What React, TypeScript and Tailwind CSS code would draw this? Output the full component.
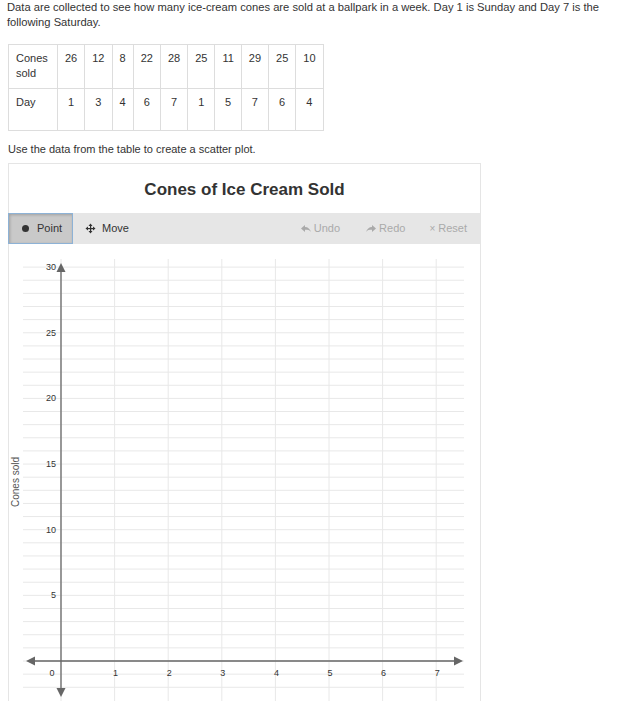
import React from "react";

const cones = [26, 12, 8, 22, 28, 25, 11, 29, 25, 10];
const days = [1, 3, 4, 6, 7, 1, 5, 7, 6, 4];

const X0 = 61;
const Y0 = 660;
const XU = 53.6;
const YU = 13.13;

function Plot() {
  const hLines = [];
  for (let k = -2; k <= 30; k++) hLines.push(Y0 - k * YU);
  const vLines = [];
  for (let k = 0; k <= 7; k++) vLines.push(X0 + k * XU);

  return (
    <svg width="471" height="460" className="block">
      <g transform="translate(-9,-243)">
        {hLines.map((y, i) => (
          <line key={"h" + i} x1={23} x2={464} y1={y} y2={y} stroke="#e8e8e8" strokeWidth={1} />
        ))}
        {vLines.map((x, i) => (
          <line key={"v" + i} x1={x} x2={x} y1={258} y2={704} stroke="#e8e8e8" strokeWidth={1} />
        ))}
        {/* axes */}
        <line x1={30} x2={458} y1={Y0} y2={Y0} stroke="#666" strokeWidth={1.3} />
        <line x1={X0} x2={X0} y1={266} y2={690} stroke="#666" strokeWidth={1.3} />
        <polygon points="61,262 65.5,271 56.5,271" fill="#666" />
        <polygon points="61,696 65.5,687 56.5,687" fill="#666" />
        <polygon points="463,660 454,655.5 454,664.5" fill="#666" />
        <polygon points="26,660 35,655.5 35,664.5" fill="#666" />
        {[5, 10, 15, 20, 25, 30].map((v) => (
          <text
            key={"y" + v}
            x={56}
            y={Y0 - v * YU + 3}
            fontSize="9"
            textAnchor="end"
            fill="#333"
            fontFamily="Liberation Sans, Arial, sans-serif"
          >
            {v}
          </text>
        ))}
        <text x={52} y={675} fontSize="9" textAnchor="middle" fill="#333" fontFamily="Liberation Sans, Arial, sans-serif">
          0
        </text>
        {[1, 2, 3, 4, 5, 6, 7].map((v) => (
          <text
            key={"x" + v}
            x={X0 + v * XU + 1}
            y={675}
            fontSize="9"
            textAnchor="middle"
            fill="#333"
            fontFamily="Liberation Sans, Arial, sans-serif"
          >
            {v}
          </text>
        ))}
        <text
          x={0}
          y={0}
          transform="translate(19,481) rotate(-90)"
          fontSize="10"
          textAnchor="middle"
          fill="#555"
          fontFamily="Liberation Sans, Arial, sans-serif"
        >
          Cones sold
        </text>
      </g>
    </svg>
  );
}

function MoveIcon() {
  return (
    <svg width="11" height="11" viewBox="0 0 11 11" className="mr-[6px]">
      <path d="M5.5 0.5 L3.5 3 H7.5 Z M5.5 10.5 L3.5 8 H7.5 Z M0.5 5.5 L3 3.5 V7.5 Z M10.5 5.5 L8 3.5 V7.5 Z" fill="#333" />
      <rect x="5" y="2" width="1.2" height="7" fill="#333" />
      <rect x="2" y="5" width="7" height="1.2" fill="#333" />
    </svg>
  );
}

function UndoIcon({ flip }: { flip?: boolean }) {
  return (
    <svg width="10" height="8" viewBox="0 0 10 8" className={flip ? "mr-[3px] -scale-x-100" : "mr-[3px]"}>
      <path d="M0 3.5 L4 0 V2 C7 2 9 4 10 7 C8.5 5 7 4.8 4 4.8 V7 Z" fill="#aaa" />
    </svg>
  );
}

export default function App() {
  return (
    <div
      className="w-[626px] h-[701px] overflow-hidden bg-white text-[#333]"
      style={{ fontFamily: '"Liberation Sans", Arial, sans-serif' }}
    >
      <p className="mt-0 pl-[7px] pr-[18px] text-[11.2px] leading-[15px]">
        Data are collected to see how many ice-cream cones are sold at a ballpark in a week. Day 1 is Sunday and Day 7 is the following Saturday.
      </p>

      <table className="ml-[8px] mt-[14px] border-collapse text-[11px] leading-[15px]">
        <tbody>
          <tr className="h-[44px]">
            <td className="border border-[#ddd] w-[49px] px-[7px] pt-[6px] align-top">Cones sold</td>
            {cones.map((c, i) => (
              <td key={i} className="border border-[#ddd] px-[7px] pt-[6px] align-top text-center">
                {c}
              </td>
            ))}
          </tr>
          <tr className="h-[42px]">
            <td className="border border-[#ddd] px-[7px] pt-[6px] align-top">Day</td>
            {days.map((d, i) => (
              <td key={i} className="border border-[#ddd] px-[7px] pt-[6px] align-top text-center">
                {d}
              </td>
            ))}
          </tr>
        </tbody>
      </table>

      <p className="ml-[8px] mt-[11px] text-[11px] leading-[15px]">Use the data from the table to create a scatter plot.</p>

      <div className="ml-[8px] mt-[6px] w-[473px] border border-[#e5e5e5]">
        <div className="h-[49px] pt-[2px] flex items-center justify-center text-[17px] font-bold text-[#333]">
          Cones of Ice Cream Sold
        </div>
        <div className="h-[31px] bg-[#e6e6e6] flex items-center text-[11px] -ml-px">
          <div className="h-[31px] w-[65px] flex items-center pl-[13px] bg-[#c9c9c9] border border-[#8db2d6] shadow-[inset_1px_1px_3px_rgba(0,0,0,0.2)]">
            <span className="w-[7px] h-[7px] rounded-full bg-[#333] mr-[8px]" />
            Point
          </div>
          <div className="flex items-center ml-[12px]">
            <MoveIcon />
            Move
          </div>
          <div className="ml-auto flex items-center text-[#aaa] pr-[13px]">
            <div className="flex items-center">
              <UndoIcon />
              Undo
            </div>
            <div className="flex items-center ml-[26px]">
              <UndoIcon flip />
              Redo
            </div>
            <div className="flex items-center ml-[24px]">
              <span className="mr-[3px] text-[10px]">×</span>
              Reset
            </div>
          </div>
        </div>
        <Plot />
      </div>
    </div>
  );
}
